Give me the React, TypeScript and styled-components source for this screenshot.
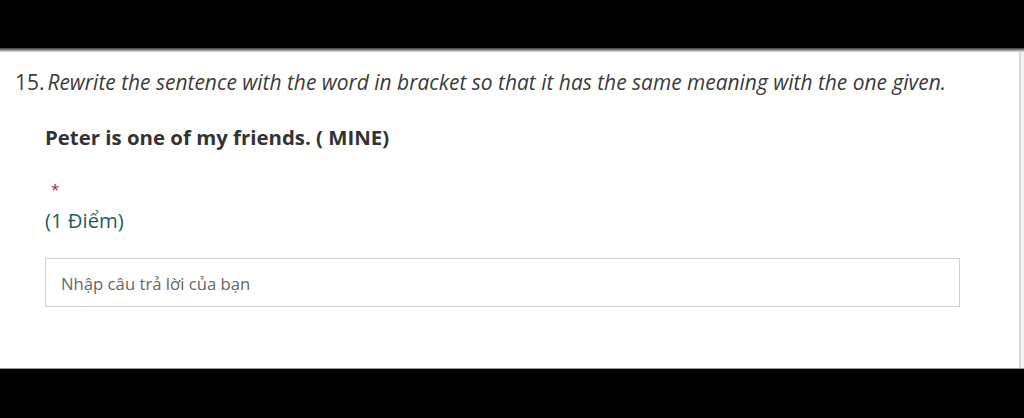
import React from "react";
import styled, { createGlobalStyle } from "styled-components";

const Global = createGlobalStyle`
  html, body { margin: 0; padding: 0; background: #000; }
  body { font-family: "Open Sans", "Noto Sans", sans-serif; }
`;

const Screen = styled.div`
  width: 1024px;
  height: 418px;
  background: #000;
  display: flex;
  flex-direction: column;
`;

const TopBar = styled.div`
  height: 48px;
  flex: none;
  background: #000;
`;

const Edge = styled.div`
  height: 4px;
  flex: none;
  background: linear-gradient(#3a3a3a, #8a8a8a 50%, #e6e6e6);
`;

const Panel = styled.div`
  height: 316px;
  flex: none;
  display: flex;
  background: #fff;
  border-bottom: 1px solid #9a9a9a;
`;

const Content = styled.div`
  flex: 1;
  display: flex;
  flex-direction: column;
  padding: 17px 0 0 15px;
`;

const Scrollbar = styled.div`
  width: 3px;
  flex: none;
  background: #f4f4f4;
  border-left: 2px solid #d8d8d8;
`;

const Question = styled.div`
  display: flex;
  align-items: baseline;
  gap: 3px;
  color: #3b3b3b;
  font-size: 20.95px;
  line-height: 26px;
`;

const Number = styled.span`
  font-style: normal;
`;

const Title = styled.span`
  font-style: italic;
`;

const Body = styled.div`
  display: flex;
  flex-direction: column;
  padding-left: 30px;
`;

const Sentence = styled.div`
  margin-top: 29px;
  font-weight: 700;
  font-size: 20.4px;
  line-height: 26px;
  color: #333;
`;

const Required = styled.div`
  margin-top: 30px;
  padding-left: 6px;
  color: #a4262c;
  font-size: 15px;
  line-height: 18px;
`;

const Points = styled.div`
  margin-top: 9px;
  color: #265e5a;
  font-size: 20.3px;
  line-height: 26px;
`;

const Input = styled.div`
  margin-top: 25px;
  width: 915px;
  height: 49px;
  box-sizing: border-box;
  border: 1px solid #cfcfcf;
  display: flex;
  align-items: center;
  padding: 2px 0 0 15px;
  color: #666;
  font-size: 16.7px;
`;

const Bottom = styled.div`
  flex: 1;
  background: #000;
`;

export default function App() {
  return (
    <Screen>
      <Global />
      <TopBar />
      <Edge />
      <Panel>
        <Content>
          <Question>
            <Number>15.</Number>
            <Title>
              Rewrite the sentence with the word in bracket so that it has the same meaning with the one given.
            </Title>
          </Question>
          <Body>
            <Sentence>Peter is one of my friends. ( MINE)</Sentence>
            <Required>*</Required>
            <Points>(1 Điểm)</Points>
            <Input>Nhập câu trả lời của bạn</Input>
          </Body>
        </Content>
        <Scrollbar />
      </Panel>
      <Bottom />
    </Screen>
  );
}
